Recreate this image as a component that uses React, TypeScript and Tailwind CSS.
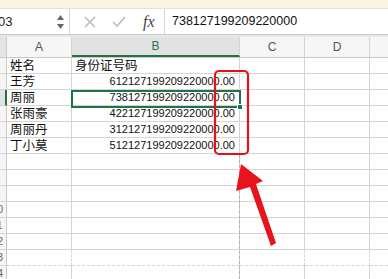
import React from "react";

const rows: [string, string][] = [
  ["姓名", "身份证号码"],
  ["王芳", "612127199209220000.00"],
  ["周丽", "738127199209220000.00"],
  ["张雨豪", "422127199209220000.00"],
  ["周丽丹", "312127199209220000.00"],
  ["丁小莫", "512127199209220000.00"],
];

const cjk = { fontFamily: '"Noto Sans CJK SC", "Noto Sans", sans-serif' };
const num = { fontFamily: '"Liberation Sans", Arial, sans-serif' };

export default function App() {
  const allRows = Array.from({ length: 14 }, (_, i) => i + 1);
  return (
    <div className="relative w-[388px] h-[279px] overflow-hidden bg-white">
      {/* top strip */}
      <div className="h-[9px] bg-[#fcf5df] border-b border-[#e8e2cc]" />
      {/* formula bar */}
      <div className="h-[26px] flex items-center border-b border-[#c8c8c8] bg-white">
        <div className="w-[70px] h-full flex items-center justify-between pr-[5px] border-r border-[#d4d4d4]">
          <span className="text-[13px] text-[#222] -ml-[2px]" style={num}>03</span>
          <div className="flex flex-col items-center gap-[4px]">
            <svg width="7" height="5" viewBox="0 0 7 5"><path d="M3.5 0 L7 5 L0 5Z" fill="#666" /></svg>
            <svg width="7" height="5" viewBox="0 0 7 5"><path d="M0 0 L7 0 L3.5 5Z" fill="#666" /></svg>
          </div>
        </div>
        <div className="w-[95px] h-full flex items-center border-r border-[#d4d4d4]">
          <svg width="12" height="12" viewBox="0 0 12 12" className="ml-[14px]">
            <path d="M1 1 L11 11 M11 1 L1 11" stroke="#bdbdbd" strokeWidth="1.6" />
          </svg>
          <svg width="14" height="12" viewBox="0 0 14 12" className="ml-[16px]">
            <path d="M1 6 L5 10 L13 1" stroke="#bdbdbd" strokeWidth="1.6" fill="none" />
          </svg>
          <span className="ml-[17px] text-[16px] italic text-[#444]" style={{ fontFamily: '"Liberation Serif", serif' }}>fx</span>
        </div>
        <span className="ml-[7px] text-[12.5px] text-[#111]" style={num}>738127199209220000</span>
      </div>
      <div className="h-[2px] bg-[#e9e9e9]" />
      {/* column header */}
      <div className="grid grid-cols-[7px_65px_168px_65px_65px_18px] h-[21px] bg-[#f6f6f6] border-b border-[#c8c8c8]">
        <div className="border-r border-[#c8c8c8] bg-[#e4e4e4]" />
        <div className="border-r border-[#d4d4d4] flex items-center justify-center text-[12px] text-[#555]" style={num}>A</div>
        <div className="border-r border-[#d4d4d4] flex items-center justify-center text-[12px] text-[#217346] bg-[#e2e2e2] border-b-2 border-b-[#217346]" style={num}>B</div>
        <div className="border-r border-[#d4d4d4] flex items-center justify-center text-[12px] text-[#555]" style={num}>C</div>
        <div className="border-r border-[#d4d4d4] flex items-center justify-center text-[12px] text-[#555]" style={num}>D</div>
        <div />
      </div>
      {/* rows */}
      {allRows.map((r) => {
        const data = rows[r - 1];
        const sel = r === 3;
        const bb = r === 13 ? "border-dashed" : "";
        return (
          <div key={r} className="grid grid-cols-[7px_65px_168px_65px_65px_18px] h-[16px]">
            <div className={`overflow-hidden flex items-center border-b border-[#d4d4d4] ${sel ? "bg-[#e2e2e2] border-r-2 border-r-[#217346]" : "bg-[#f6f6f6] border-r border-r-[#c8c8c8]"}`}>
              <span className="shrink-0 w-[20px] -ml-[13px] text-center text-[11px] text-[#666] leading-none" style={num}>{r}</span>
            </div>
            <div className={`border-r border-b border-[#d4d4d4] ${bb} flex items-center pl-[3px] text-[12.5px] text-[#111] leading-none`} style={cjk}>
              {data ? data[0] : ""}
            </div>
            <div className={`border-r border-b border-[#d4d4d4] ${bb} flex items-center ${r === 1 ? "justify-start pl-[3px]" : "justify-end pr-[4px]"} text-[#111] leading-none`}
              style={r === 1 ? { ...cjk, fontSize: "12.5px" } : { ...num, fontSize: "11px" }}>
              {data ? data[1] : ""}
            </div>
            <div className={`border-r border-b border-[#d4d4d4] ${bb}`} />
            <div className={`border-r border-b border-[#d4d4d4] ${bb}`} />
            <div className={`border-b border-[#d4d4d4] ${bb}`} />
          </div>
        );
      })}
      {/* page break line */}
      <div className="absolute left-[239px] top-[155px] h-[124px] border-l border-dashed border-[#b0b0b0]" />
      {/* selected cell B3 */}
      <div className="absolute left-[71px] top-[90px] w-[170px] h-[18px] border-2 border-[#217346] pointer-events-none" />
      <div className="absolute left-[237px] top-[104px] w-[6px] h-[6px] bg-[#217346] border border-white" />
      {/* annotation */}
      <svg className="absolute left-0 top-0" width="388" height="279" viewBox="0 0 388 279">
        <rect x="215" y="71" width="33" height="83" rx="4" fill="none" stroke="#e3121a" strokeWidth="2.2" />
        <path d="M241 164 L263 181 L256 184 L276 243 L271 246 L250 187 L236 191 Z" fill="#e8141b" />
      </svg>
    </div>
  );
}
